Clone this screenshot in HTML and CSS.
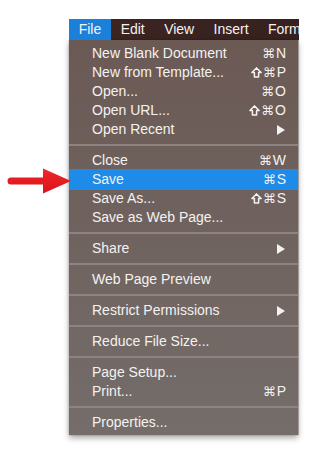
FILE: index.html
```html
<!DOCTYPE html>
<html>
<head>
<meta charset="utf-8">
<link rel="stylesheet" href="styles.css">
</head>
<body>
<div class="stage">
  <div class="menu">
    <div class="menubar">
      <span class="mb-item active">File</span>
      <span class="mb-item">Edit</span>
      <span class="mb-item">View</span>
      <span class="mb-item">Insert</span>
      <span class="mb-item">Format</span>
    </div>
    <div class="panel">
      <div class="row"><span class="label">New Blank Document</span><span class="key"><span class="mod">⌘</span>N</span></div>
      <div class="row"><span class="label">New from Template...</span><span class="key"><svg class="shift" viewBox="0 0 11 11"><path d="M5.5 0.9 L10.1 5.6 H7.6 V10.1 H3.4 V5.6 H0.9 Z"/></svg><span class="mod">⌘</span>P</span></div>
      <div class="row"><span class="label">Open...</span><span class="key"><span class="mod">⌘</span>O</span></div>
      <div class="row"><span class="label">Open URL...</span><span class="key"><svg class="shift" viewBox="0 0 11 11"><path d="M5.5 0.9 L10.1 5.6 H7.6 V10.1 H3.4 V5.6 H0.9 Z"/></svg><span class="mod">⌘</span>O</span></div>
      <div class="row"><span class="label">Open Recent</span><svg class="sub" viewBox="0 0 8 10"><polygon points="0,0 8,5 0,10"/></svg></div>
      <div class="sep"></div>
      <div class="row"><span class="label">Close</span><span class="key"><span class="mod">⌘</span>W</span></div>
      <div class="row selected"><span class="label">Save</span><span class="key"><span class="mod">⌘</span>S</span></div>
      <div class="row"><span class="label">Save As...</span><span class="key"><svg class="shift" viewBox="0 0 11 11"><path d="M5.5 0.9 L10.1 5.6 H7.6 V10.1 H3.4 V5.6 H0.9 Z"/></svg><span class="mod">⌘</span>S</span></div>
      <div class="row"><span class="label">Save as Web Page...</span></div>
      <div class="sep"></div>
      <div class="row"><span class="label">Share</span><svg class="sub" viewBox="0 0 8 10"><polygon points="0,0 8,5 0,10"/></svg></div>
      <div class="sep"></div>
      <div class="row"><span class="label">Web Page Preview</span></div>
      <div class="sep"></div>
      <div class="row"><span class="label">Restrict Permissions</span><svg class="sub" viewBox="0 0 8 10"><polygon points="0,0 8,5 0,10"/></svg></div>
      <div class="sep"></div>
      <div class="row"><span class="label">Reduce File Size...</span></div>
      <div class="sep"></div>
      <div class="row"><span class="label">Page Setup...</span></div>
      <div class="row"><span class="label">Print...</span><span class="key"><span class="mod">⌘</span>P</span></div>
      <div class="sep"></div>
      <div class="row"><span class="label">Properties...</span></div>
    </div>
  </div>
  <svg class="arrow" viewBox="0 0 66 26" width="66" height="26">
    <defs>
      <linearGradient id="rg" x1="0" y1="0" x2="0" y2="1">
        <stop offset="0" stop-color="#f0262a"/>
        <stop offset="1" stop-color="#d8141a"/>
      </linearGradient>
    </defs>
    <path d="M5 9.5 H37 V0.5 L65 13 L37 25.5 V16.5 H5 A3.5 3.5 0 0 1 5 9.5 Z" fill="url(#rg)"/>
  </svg>
</div>
</body>
</html>
```
FILE: styles.css
```css
html, body {
  margin: 0;
  padding: 0;
  background: #ffffff;
}
.stage {
  position: relative;
  width: 322px;
  height: 452px;
  padding: 19px 0 0 69px;
  box-sizing: border-box;
  font-family: "Liberation Sans", Arial, sans-serif;
  font-size: 14px;
  color: #f4f2f1;
}
.menu {
  width: 230px;
}
.menubar {
  height: 21px;
  display: flex;
  align-items: center;
  background: linear-gradient(90deg, #3e2522, #35211f);
  overflow: hidden;
  white-space: nowrap;
}
.mb-item {
  flex: none;
  height: 21px;
  line-height: 21px;
  padding: 0 9.7px;
}
.mb-item.active {
  background: #1b80d9;
}
.panel {
  width: 229px;
  padding: 4px 0 3px;
  background: linear-gradient(180deg, #6b5954 0%, #6f625e 45%, #746d6a 100%);
  box-shadow: 1px 0 0 #a29c99, 0 3px 6px rgba(0, 0, 0, 0.35), 0 0 2px rgba(0, 0, 0, 0.25);
}
.row {
  display: flex;
  align-items: center;
  height: 19px;
  padding: 0 12px 0 23px;
  line-height: 19px;
}
.row.selected {
  height: 21px;
  margin: -1px 0;
  background: #1e8be8;
}
.label {
  flex: 1;
}
.key {
  flex: none;
  display: flex;
  align-items: center;
}
.shift {
  width: 11px;
  height: 11px;
  margin-right: 1px;
  fill: none;
  stroke: #f4f2f1;
  stroke-width: 1.5;
  stroke-linejoin: round;
}
.mod {
  font-family: "DejaVu Sans", sans-serif;
  font-size: 13px;
  margin-right: 1px;
}
.sub {
  width: 8px;
  height: 10px;
  margin-right: 1px;
  fill: #f4f2f1;
}
.sep {
  height: 2px;
  margin: 5px 0;
  background: #8d8380;
}
.arrow {
  position: absolute;
  left: 6px;
  top: 168px;
}
```
